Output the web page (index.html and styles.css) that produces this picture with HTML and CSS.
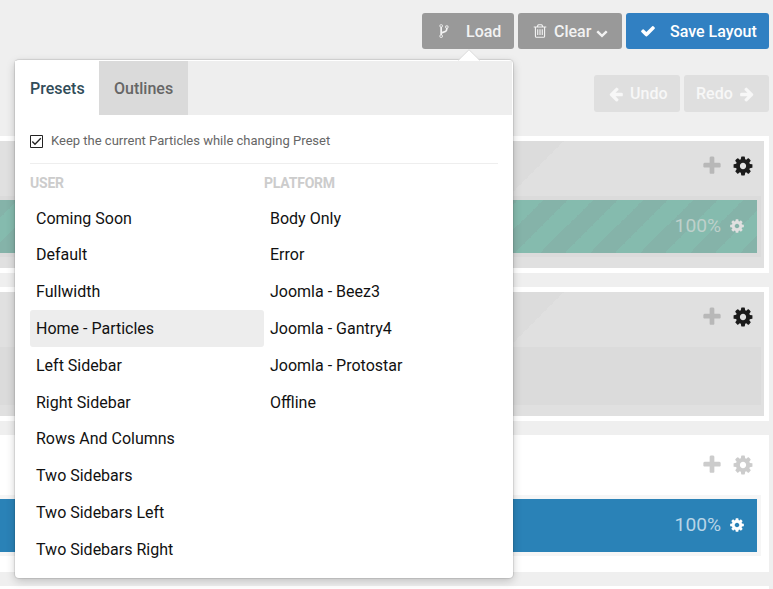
FILE: index.html
```html
<!DOCTYPE html>
<html lang="en">
<head>
<meta charset="utf-8">
<title>Layout Manager</title>
<link rel="stylesheet" href="styles.css">
</head>
<body>
<svg class="sprite" aria-hidden="true">
  <symbol id="check" viewBox="0 0 1792 1792"><path d="M1671 566q0 40-28 68l-724 724-136 136q-28 28-68 28t-68-28l-136-136-362-362q-28-28-28-68t28-68l136-136q28-28 68-28t68 28l294 295 656-657q28-28 68-28t68 28l136 136q28 28 28 68z"/></symbol>
  <symbol id="plus" viewBox="0 0 1792 1792"><path d="M1600 736v192q0 40-28 68t-68 28h-416v416q0 40-28 68t-68 28h-192q-40 0-68-28t-28-68v-416h-416q-40 0-68-28t-28-68v-192q0-40 28-68t68-28h416v-416q0-40 28-68t68-28h192q40 0 68 28t28 68v416h416q40 0 68 28t28 68z"/></symbol>
  <symbol id="cog" viewBox="0 0 1792 1792"><path d="M1152 896q0-106-75-181t-181-75-181 75-75 181 75 181 181 75 181-75 75-181zm512-109v222q0 12-8 23t-20 13l-185 28q-19 54-39 91 35 50 107 138 10 12 10 25t-9 23q-27 37-99 108t-94 71q-12 0-26-9l-138-108q-44 23-91 38-16 136-29 186-7 28-36 28h-222q-14 0-24.500-8.500t-11.500-21.500l-28-184q-49-16-90-37l-141 107q-10 9-25 9-14 0-25-11-126-114-165-168-7-10-7-23 0-12 8-23 15-21 51-66.500t54-70.500q-27-50-41-99l-183-27q-13-2-21-12.500t-8-23.500v-222q0-12 8-23t19-13l186-28q14-46 39-92-40-57-107-138-10-12-10-24 0-10 9-23 26-36 98.500-107.500t94.500-71.500q13 0 26 10l138 107q44-23 91-38 16-136 29-186 7-28 36-28h222q14 0 24.500 8.500t11.500 21.500l28 184q49 16 90 37l142-107q9-9 24-9 13 0 25 10 129 119 165 170 7 8 7 22 0 12-8 23-15 21-51 66.500t-54 70.500q26 50 41 98l183 28q13 2 21 12.500t8 23.500z"/></symbol>
  <symbol id="arrow" viewBox="0 0 1792 1792"><path d="M1664 896v128q0 53-32.500 90.500t-84.500 37.500h-704l293 294q38 36 38 90t-38 90l-75 76q-37 37-90 37-52 0-91-37l-651-652q-37-37-37-90 0-52 37-91l651-650q38-38 91-38 52 0 90 38l75 74q38 38 38 91t-38 91l-293 293h704q52 0 84.500 37.500t32.500 90.500z"/></symbol>
  <symbol id="chevron" viewBox="0 0 1792 1792"><path d="M1683 808l-742 741q-19 19-45 19t-45-19l-742-741q-19-19-19-45.500t19-45.500l166-165q19-19 45-19t45 19l531 531 531-531q19-19 45-19t45 19l166 165q19 19 19 45.500t-19 45.500z"/></symbol>
  <symbol id="trash" viewBox="0 0 1792 1792"><path d="M704 736v576q0 14-9 23t-23 9h-64q-14 0-23-9t-9-23v-576q0-14 9-23t23-9h64q14 0 23 9t9 23zm256 0v576q0 14-9 23t-23 9h-64q-14 0-23-9t-9-23v-576q0-14 9-23t23-9h64q14 0 23 9t9 23zm256 0v576q0 14-9 23t-23 9h-64q-14 0-23-9t-9-23v-576q0-14 9-23t23-9h64q14 0 23 9t9 23zm128 724v-948h-896v948q0 22 7 40.500t14.500 27 10.500 8.500h832q3 0 10.500-8.500t14.500-27 7-40.500zm-672-1076h448l-48-117q-7-9-17-11h-317q-10 2-17 11zm928 32v64q0 14-9 23t-23 9h-96v948q0 83-47 143.500t-113 60.500h-832q-66 0-113-58.500t-47-141.500v-952h-96q-14 0-23-9t-9-23v-64q0-14 9-23t23-9h309l70-167q15-37 54-63t79-26h320q40 0 79 26t54 63l70 167h309q14 0 23 9t9 23z"/></symbol>
  <symbol id="fork" viewBox="0 0 1792 1792"><path d="M672 1472q0-40-28-68t-68-28-68 28-28 68 28 68 68 28 68-28 28-68zm0-1152q0-40-28-68t-68-28-68 28-28 68 28 68 68 28 68-28 28-68zm640 128q0-40-28-68t-68-28-68 28-28 68 28 68 68 28 68-28 28-68zm96 0q0 52-26 96.500t-70 69.500q-2 287-226 414-67 38-203 81-128 40-169.500 71t-41.500 100v26q44 25 70 69.500t26 96.500q0 80-56 136t-136 56-136-56-56-136q0-52 26-96.500t70-69.500v-820q-44-25-70-69.500t-26-96.500q0-80 56-136t136-56 136 56 56 136q0 52-26 96.500t-70 69.500v497q54-26 154-57 55-17 87.500-29.500t70.500-31 59-39.500 40.500-51 28-69.500 8.500-91.500q-44-25-70-69.500t-26-96.500q0-80 56-136t136-56 136 56 56 136z"/></symbol>
</svg>
<div class="toolbar">
  <div class="btn load"><svg class="icon"><use href="#fork"/></svg><span>Load</span></div>
  <div class="btn clear"><svg class="icon"><use href="#trash"/></svg><span>Clear</span><svg class="icon small"><use href="#chevron"/></svg></div>
  <div class="btn save"><svg class="icon"><use href="#check"/></svg><span>Save Layout</span></div>
</div>
<div class="history">
  <div class="btn undo"><svg class="icon"><use href="#arrow"/></svg><span>Undo</span></div>
  <div class="btn redo"><span>Redo</span><svg class="icon flip"><use href="#arrow"/></svg></div>
</div>
<main class="sections">
  <section class="section inherited">
    <div class="actions"><svg class="icon add"><use href="#plus"/></svg><svg class="icon gear"><use href="#cog"/></svg></div>
    <div class="grid"><div class="block striped"><span>100%</span><svg class="icon"><use href="#cog"/></svg></div></div>
  </section>
  <section class="section inherited second">
    <div class="actions"><svg class="icon add"><use href="#plus"/></svg><svg class="icon gear"><use href="#cog"/></svg></div>
    <div class="grid empty"></div>
  </section>
  <section class="section plain">
    <div class="actions"><svg class="icon add"><use href="#plus"/></svg><svg class="icon gear"><use href="#cog"/></svg></div>
    <div class="grid"><div class="block"><span>100%</span><svg class="icon"><use href="#cog"/></svg></div></div>
  </section>
  <section class="section next"></section>
</main>
<div class="popover">
  <svg class="pointer" viewBox="0 0 22 12"><path class="fill" d="M0 12L11 1L22 12z"/><path class="edge" d="M0 11.500L11 .7L22 11.500"/></svg>
  <div class="tabs"><div class="tab active">Presets</div><div class="tab">Outlines</div></div>
  <div class="content">
    <div class="keep"><svg class="checkbox" viewBox="0 0 13 13"><path d="M.5.5h12v12H.5z"/><path class="tick" d="M2.300 6.500L5 9.300L10.800 3.300"/></svg><span>Keep the current Particles while changing Preset</span></div>
    <div class="columns">
      <div class="column">
        <h6>USER</h6>
        <ul><li>Coming Soon</li><li>Default</li><li>Fullwidth</li><li class="selected">Home - Particles</li><li>Left Sidebar</li><li>Right Sidebar</li><li>Rows And Columns</li><li>Two Sidebars</li><li>Two Sidebars Left</li><li>Two Sidebars Right</li></ul>
      </div>
      <div class="column">
        <h6>PLATFORM</h6>
        <ul><li>Body Only</li><li>Error</li><li>Joomla - Beez3</li><li>Joomla - Gantry4</li><li>Joomla - Protostar</li><li>Offline</li></ul>
      </div>
    </div>
  </div>
</div>
</body>
</html>
```
FILE: styles.css
```css
* { box-sizing: border-box; }
body {
  margin: 0;
  height: 589px;
  overflow: hidden;
  position: relative;
  background: #efefef;
  font-family: Roboto, sans-serif;
  color: #111;
}
.sprite { position: absolute; width: 0; height: 0; }
.icon { width: 16px; height: 16px; fill: currentColor; flex: none; }
.flip { transform: scaleX(-1); }
.toolbar, .history { display: flex; justify-content: flex-end; gap: 4px; padding-right: 4px; }
.toolbar { padding-top: 13px; }
.history { padding-top: 26px; }
.btn {
  display: flex;
  align-items: center;
  height: 36px;
  border-radius: 3px;
  color: #fff;
  font-size: 16px;
  font-weight: 500;
  line-height: 37px;
  white-space: nowrap;
}
.load, .clear { background: #999; color: #f2f2f2; }
.load { width: 92px; padding-left: 14px; gap: 14px; }
.clear { width: 104px; padding-left: 14px; gap: 6px; }
.clear .small { width: 12px; height: 12px; margin: 3px 0 0 -1px; }
.save { width: 143px; padding-left: 14px; gap: 14px; background: #3180c2; }
.history .btn { height: 37px; background: #dfdfdf; color: #f7f7f7; }
.undo { width: 86px; padding-left: 14px; gap: 6px; }
.redo { width: 85px; padding-left: 12px; gap: 6px; }
.sections { margin-top: 24px; width: 769px; }
.section { background: #fff; margin-bottom: 14px; }
.inherited {
  height: 137px;
  border: solid #fff;
  border-width: 5px 5px 5px 0;
  background: linear-gradient(135deg, #e0e0e0 25%, #dcdcdc 25% 50%, #e0e0e0 50%) 0 0 / 564px 564px no-repeat #e0e0e0;
}
.second { height: 134px; }
.plain { height: 137px; padding-top: 5px; }
.actions { display: flex; justify-content: flex-end; gap: 9px; height: 55px; padding: 14px 10px 0 0; }
.plain .actions { padding-right: 15px; }
.actions .icon { width: 22px; height: 22px; }
.add { color: #b8b8b8; }
.gear { color: #1b1b1b; }
.plain .icon { color: #ccc; }
.grid { width: 761px; padding: 4px 4px 4px 0; background: #dbdbdb; }
.plain .grid { background: #f6f6f6; }
.empty { height: 58px; }
.block {
  display: flex;
  align-items: center;
  justify-content: flex-end;
  gap: 8px;
  height: 53px;
  padding: 0 12px 3px 0;
  background: #2a82b7;
  color: #b8d5e7;
  font-size: 19.200px;
}
.block .icon { position: relative; top: 1px; color: #fff; }
.plain .block .icon { color: #fff; }
.striped {
  background: linear-gradient(-45deg, #85b3a9 25%, #85bbae 25% 50%, #85b3a9 50% 75%, #85bbae 75%) 18px 0 / 50px 50px;
  color: #bed0cb;
}
.striped .icon { color: #e0e0e0; }
.next { height: 3px; margin: 0; }
.popover {
  position: absolute;
  left: 15px;
  top: 60px;
  width: 498px;
  height: 518px;
  padding: 1px 1px 0 0;
  border-radius: 4px;
  background: #fff;
  box-shadow: 0 0 1px 1px rgba(0, 0, 0, .1), 0 3px 10px rgba(0, 0, 0, .2);
}
.pointer { position: absolute; left: 443px; top: -11px; width: 22px; height: 12px; }
.pointer .fill { fill: #fff; }
.pointer .edge { fill: none; stroke: #ddd; }
.tabs { display: flex; height: 54px; background: #eee; }
.tab { width: 89px; padding-left: 15px; background: #dadada; color: #666; font-size: 16px; font-weight: 500; line-height: 56px; }
.tab.active { width: 84px; background: #fff; color: #314c59; }
.content { padding: 0 14px 0 15px; }
.keep { display: flex; align-items: center; gap: 8px; height: 49px; padding-top: 4px; border-bottom: 1px solid #eee; color: #666; font-size: 13px; }
.keep span { margin-top: -2px; }
.checkbox { width: 13px; height: 13px; fill: #fff; stroke: #222; }
.checkbox .tick { fill: none; stroke-width: 1.300; }
.columns { display: grid; grid-template-columns: 234px 234px; }
h6 { margin: 0; height: 35.700px; color: #ccc; font-size: 14px; font-weight: 700; line-height: 38px; letter-spacing: -.2px; }
ul { list-style: none; margin: 0; padding: 0; }
li { height: 36.800px; padding-left: 6px; border-radius: 3px; font-size: 16px; line-height: 37.500px; }
.selected { background: #ededed; }
```
